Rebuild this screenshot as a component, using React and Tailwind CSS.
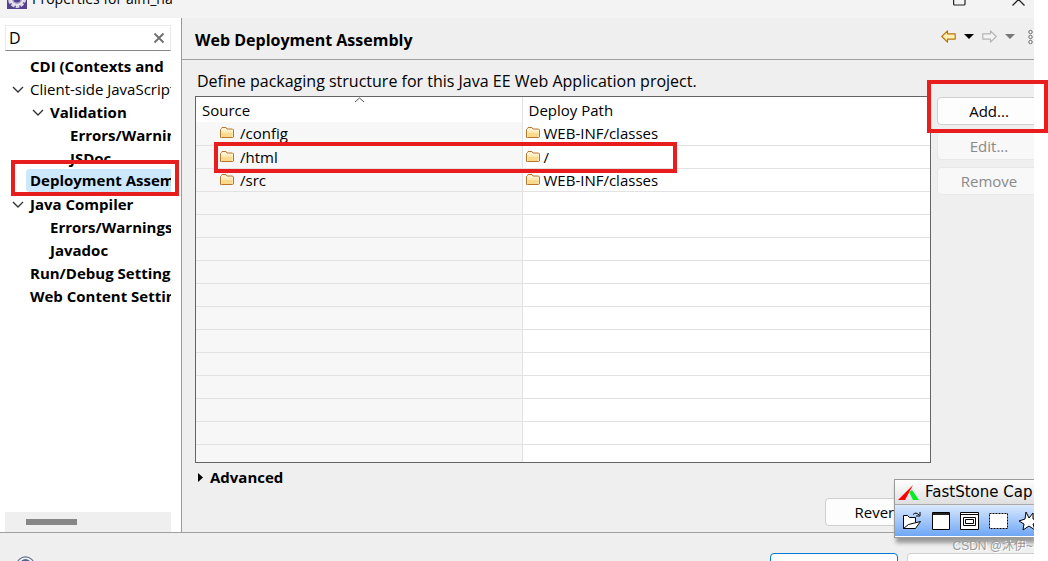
import { useState } from "react";

const treeItems = [
  { label: "CDI (Contexts and", indent: "pl-[25px]", bold: true },
  { label: "Client-side JavaScript", indent: "pl-[5px]", open: true },
  { label: "Validation", indent: "pl-[25px]", bold: true, open: true },
  { label: "Errors/Warnings", indent: "pl-[65px]", bold: true },
  { label: "JSDoc", indent: "pl-[65px]", bold: true },
  { label: "Deployment Assembly", indent: "pl-[25px]", bold: true, selected: true },
  { label: "Java Compiler", indent: "pl-[5px]", bold: true, open: true },
  { label: "Errors/Warnings", indent: "pl-[45px]", bold: true },
  { label: "Javadoc", indent: "pl-[45px]", bold: true },
  { label: "Run/Debug Settings", indent: "pl-[25px]", bold: true },
  { label: "Web Content Settings", indent: "pl-[25px]", bold: true },
];

const mappings = [
  { source: "/config", path: "WEB-INF/classes" },
  { source: "/html", path: "/" },
  { source: "/src", path: "WEB-INF/classes" },
];

const emptyRows = Array.from({ length: 12 }, (_, i) => i);

const FolderIcon = () => (
  <svg width="14" height="12" viewBox="0 0 14 12" className="shrink-0" aria-hidden="true">
    <path d="M.5 10.5v-8l1-1 .5-1h4l1 1.500h5.500l1 1v7l-1 .5h-11z" fill="#fff3cf" stroke="#b9752c" strokeLinejoin="round" />
    <path d="M1.500 6h11v4h-11z" fill="#fbd98c" />
    <path d="M1.500 4h11v2h-11z" fill="#fde9b4" />
  </svg>
);

const EclipseIcon = () => (
  <svg width="20" height="20" viewBox="0 0 20 20" className="shrink-0" aria-hidden="true">
    <rect width="20" height="20" fill="#54408c" />
    <circle cx="10" cy="10" r="7.5" fill="none" stroke="#dcd8e6" strokeWidth="3" strokeDasharray="3.5 1.2" />
    <circle cx="10" cy="10" r="6" fill="#a9a0c4" stroke="#e6e3ee" strokeWidth="2" />
    <circle cx="10" cy="10" r="3.5" fill="#54408c" />
  </svg>
);

const ArrowIcon = ({ fill, stroke, flip }) => (
  <svg width="15" height="13" viewBox="0 0 15 13" className={flip ? "-scale-x-100" : ""} aria-hidden="true">
    <path d="M.8 6.5 6.5.8v3h7.7v5.4H6.5v3z" fill={fill} stroke={stroke} strokeWidth="1.2" strokeLinejoin="round" />
  </svg>
);

const CaretIcon = ({ color }) => (
  <svg width="10" height="5" viewBox="0 0 10 5" aria-hidden="true">
    <path d="M0 0h10L5 5z" fill={color} />
  </svg>
);

const TitleBar = () => (
  <header className="h-[18px] shrink-0 overflow-hidden bg-[#f3f3f3]">
    <div className="-mt-[11px] flex h-5 items-center pl-[7px] pr-[9px]">
      <EclipseIcon />
      <h1 className="ml-[5px] text-sm leading-5">Properties for aim_na</h1>
      <div className="ml-auto flex gap-[46px]">
        <button aria-label="Maximize">
          <svg width="13" height="13" viewBox="0 0 13 13" className="block">
            <rect x=".6" y=".6" width="11.4" height="11.4" rx="1" fill="none" stroke="#222" strokeWidth="1.2" />
          </svg>
        </button>
        <button aria-label="Close">
          <svg width="13" height="13" viewBox="0 0 13 13" className="block">
            <path d="m.5.5 12 12m0-12-12 12" stroke="#222" strokeWidth="1.3" />
          </svg>
        </button>
      </div>
    </div>
  </header>
);

const Sidebar = () => {
  const [filter, setFilter] = useState("D");

  return (
    <aside className="flex w-[182px] shrink-0 flex-col border-r border-[#9a9a9a] bg-white pl-[5px] pr-[10px] pt-[7px]">
      <div className="flex h-[26px] items-center border border-[#e9e9e9] border-b-[#868686] pl-[3px] pr-[5px]">
        <input
          type="text"
          aria-label="Filter"
          value={filter}
          onChange={(e) => setFilter(e.target.value)}
          className="min-w-0 flex-1 text-base leading-5 outline-none"
        />
        <button aria-label="Clear" onClick={() => setFilter("")}>
          <svg width="12" height="12" viewBox="0 0 12 12" className="block">
            <path d="m1.5 1.5 9 9m0-9-9 9" stroke="#6e6e6e" strokeWidth="1.8" />
          </svg>
        </button>
      </div>
      <ul className="mt-[3px] flex-1 overflow-hidden">
        {treeItems.map((item, i) => (
          <li key={i} className={`flex h-[23px] items-center whitespace-nowrap ${item.indent}`}>
            {item.open && (
              <svg width="20" height="12" viewBox="0 0 20 12" className="shrink-0" aria-hidden="true">
                <path d="m3 4 5 5 5-5" fill="none" stroke="#333" strokeWidth="1.4" />
              </svg>
            )}
            <span
              className={`flex-1 ${item.bold ? "font-bold" : ""} ${
                item.selected ? "-ml-1 rounded-l-sm bg-[#cce8ff] pl-1 leading-[23px]" : ""
              }`}
            >
              {item.label}
            </span>
          </li>
        ))}
      </ul>
      <div className="flex h-5 items-center bg-[#efefef] pl-[21px]">
        <div className="h-[6px] w-[51px] bg-[#868686]" />
      </div>
    </aside>
  );
};

const MappingTable = () => (
  <div className="min-w-0 flex-1 overflow-hidden border border-[#646464] bg-white">
    <table className="w-full table-fixed border-collapse text-left">
      <colgroup>
        <col className="w-[326px]" />
        <col />
      </colgroup>
      <thead>
        <tr className="h-[25px]">
          <th className="relative border-r border-[#e2e2e2] p-0 pl-[6px] font-normal">
            Source
            <svg width="11" height="6" viewBox="0 0 11 6" className="absolute left-[158px] top-0" aria-hidden="true">
              <path d="m1 5 4.500-4L10 5" fill="none" stroke="#555" />
            </svg>
          </th>
          <th className="p-0 pl-[6px] font-normal">Deploy Path</th>
        </tr>
      </thead>
      <tbody>
        {mappings.map((row) => (
          <tr key={row.source} className="h-[23px] border-b border-[#e2e2e2]">
            <td className="border-r border-[#e2e2e2] bg-[#f7f7f7] p-0 pl-6">
              <div className="flex h-[22px] items-center gap-[6px]">
                <FolderIcon />
                {row.source}
              </div>
            </td>
            <td className="p-0 pl-[3px]">
              <div className="flex h-[22px] items-center gap-1">
                <FolderIcon />
                {row.path}
              </div>
            </td>
          </tr>
        ))}
        {emptyRows.map((i) => (
          <tr key={i} className="h-[23px] border-b border-[#e2e2e2]">
            <td className="border-r border-[#e2e2e2] bg-[#f7f7f7] p-0" />
            <td className="p-0" />
          </tr>
        ))}
      </tbody>
    </table>
  </div>
);

const Button = ({ children, disabled, className = "" }) => (
  <button
    disabled={disabled}
    className={`h-7 w-[104px] shrink-0 rounded border border-[#cfcfcf] bg-[#fdfdfd] disabled:border-[#e8e8e8] disabled:bg-[#f8f8f8] disabled:text-[#8a8a8a] ${className}`}
  >
    {children}
  </button>
);

const MainPanel = () => (
  <main className="flex min-w-0 flex-1 flex-col overflow-hidden">
    <div className="flex h-[42px] shrink-0 items-center border-b border-[#a0a0a0] pl-[13px]">
      <h2 className="mt-[2px] text-base font-bold">Web Deployment Assembly</h2>
      <div className="-mr-px mb-1 ml-auto flex items-center gap-2">
        <button aria-label="Back"><ArrowIcon fill="#fff0b8" stroke="#b9770e" /></button>
        <button aria-label="Back history"><CaretIcon color="#000" /></button>
        <button aria-label="Forward"><ArrowIcon fill="#f4f4f4" stroke="#b4b4b4" flip /></button>
        <button aria-label="Forward history"><CaretIcon color="#777" /></button>
        <button aria-label="View menu" className="ml-1">
          <svg width="8" height="16" viewBox="0 0 8 16" className="block">
            <g fill="#fff" stroke="#666">
              <circle cx="3.500" cy="3" r="1.700" />
              <circle cx="3.500" cy="8" r="1.700" />
              <circle cx="3.500" cy="13" r="1.700" />
            </g>
          </svg>
        </button>
      </div>
    </div>
    <p className="mt-[10px] pl-[15px] text-base leading-[22px]">
      Define packaging structure for this Java EE Web Application project.
    </p>
    <div className="-mr-[7px] mt-1 flex min-h-0 flex-1 gap-[6px] pl-[13px]">
      <MappingTable />
      <div className="flex flex-col gap-[7px] pt-px">
        <Button>Add...</Button>
        <Button disabled>Edit...</Button>
        <Button disabled>Remove</Button>
      </div>
    </div>
    <button className="mt-1 flex h-5 shrink-0 items-center gap-[7px] self-start pl-4 font-bold">
      <svg width="5" height="9" viewBox="0 0 5 9" aria-hidden="true">
        <path d="M0 0v9l5-4.500z" fill="#000" />
      </svg>
      Advanced
    </button>
    <div className="mb-[6px] mt-[11px] flex justify-end pr-[105px]">
      <Button>Revert</Button>
    </div>
  </main>
);

const CaptureToolbar = () => (
  <div className="absolute bottom-[23px] right-0 w-[140px] overflow-hidden border border-r-0 border-[#9a9a9a] bg-white shadow-[2px_5px_4px_#999]">
    <div className="flex h-[25px] items-center gap-[6px] border-b border-[#aaa] bg-linear-to-b from-white to-[#dedede] pl-[3px]">
      <svg width="21" height="15" viewBox="0 0 21 15" className="shrink-0" aria-hidden="true">
        <path d="M15 0 7 15H0z" fill="#f00" />
        <path d="m11 7 3-2 7 10h-6z" fill="#0e2" />
      </svg>
      <span className="whitespace-nowrap font-['DejaVu_Sans',sans-serif] text-[15px]">FastStone Cap</span>
    </div>
    <div className="flex h-8 items-center gap-[10px] border-b border-white bg-linear-to-b from-[#dbe9fd] to-[#6ea6f5] pl-[7px]">
      <button aria-label="Open" className="shrink-0">
        <svg width="20" height="19" viewBox="0 0 20 19" className="block" fill="#fff" stroke="#000">
          <path d="M1.500 17.500v-13h4l2 2h6v5" />
          <path d="m1.500 17.500 5-4 12-3-5 7z" />
          <path d="M11 3.500q3-3 6 .500m1-3v4h-4" fill="none" />
        </svg>
      </button>
      <button aria-label="Capture window" className="shrink-0">
        <svg width="18" height="18" viewBox="0 0 18 18" className="block">
          <path d="M.5.5h17v17H.5z" fill="#fff" stroke="#000" />
          <path d="M1 1h16v2H1z" fill="#222" />
        </svg>
      </button>
      <button aria-label="Capture object" className="shrink-0">
        <svg width="19" height="18" viewBox="0 0 19 18" className="block" fill="#fff" stroke="#000">
          <path d="M.5.5h18v17H.5zM.5 2.500h18M3.500 5.500h12v8h-12zM5.500 7.500h8v4h-8z" />
        </svg>
      </button>
      <button aria-label="Capture rectangle" className="shrink-0">
        <svg width="19" height="16" viewBox="0 0 19 16" className="block">
          <path d="M.5.5h18v15H.5z" fill="#fff" stroke="#000" strokeDasharray="2 1" />
        </svg>
      </button>
      <button aria-label="Capture freehand" className="shrink-0">
        <svg width="22" height="20" viewBox="0 0 22 20" className="block">
          <path d="m8 1 3 6 4-5v6l6 2-6 3 2 6-6-4-6 4 1-6-5-3 6-2z" fill="#fff" stroke="#000" />
        </svg>
      </button>
    </div>
  </div>
);

const Footer = () => (
  <footer className="flex h-[29px] shrink-0 items-start border-t border-[#a0a0a0] pl-4">
    <button aria-label="Help" className="mt-[23px]">
      <svg width="19" height="19" viewBox="0 0 19 19" className="block">
        <circle cx="9.500" cy="9.500" r="8.700" fill="#f4f6fa" stroke="#5f6f93" strokeWidth="1.200" />
        <circle cx="9.500" cy="8.500" r="5.500" fill="#52638c" />
      </svg>
    </button>
    <div className="-mr-[10px] ml-auto mt-5 flex gap-[9px]">
      <button aria-label="Apply and Close" className="h-7 w-32 rounded border border-[#0078d4] bg-[#fdfdfd]" />
      <button aria-label="Cancel" className="h-7 w-[137px] rounded border border-[#d0d0d0] bg-[#fdfdfd]" />
    </div>
  </footer>
);

export default function App() {
  return (
    <div className="relative h-screen overflow-hidden bg-white pr-[14px] font-['Open_Sans','Noto_Sans_CJK_SC',sans-serif] text-[15px] leading-5 text-black">
      <div className="relative flex h-full flex-col overflow-hidden bg-[#efefef]">
        <TitleBar />
        <div className="flex min-h-0 flex-1">
          <Sidebar />
          <MainPanel />
        </div>
        <Footer />
        <CaptureToolbar />
        <span className="absolute bottom-[7px] right-px font-['Liberation_Sans','Noto_Sans_CJK_SC',sans-serif] text-xs text-[#999] [text-shadow:1px_1px_0_#fff]">
          CSDN @沐伊~
        </span>
      </div>

      {/* highlight boxes */}
      <div className="pointer-events-none absolute left-[11px] top-40 h-9 w-[168px] border-4 border-[#e81e1e]" />
      <div className="pointer-events-none absolute left-[214px] top-[142px] h-[31px] w-[463px] border-4 border-[#e81e1e]" />
      <div className="pointer-events-none absolute right-0 top-20 h-[53px] w-[121px] border-4 border-[#e81e1e]" />
    </div>
  );
}
